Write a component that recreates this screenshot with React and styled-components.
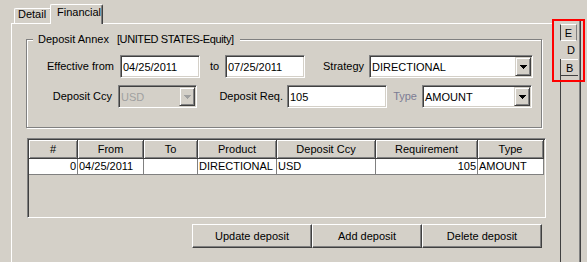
import React from "react"
import styled, { createGlobalStyle, css } from "styled-components"

const GlobalStyle = createGlobalStyle`
  html, body {
    margin: 0;
    padding: 0;
    background: #d4d0c8;
  }
  body {
    font-family: "Liberation Sans", Arial, sans-serif;
    font-size: 11px;
    color: #000;
  }
`

const sunken = css`
  box-sizing: border-box;
  border: 1px solid;
  border-color: #808080 #fff #fff #808080;
  box-shadow: inset 1px 1px 0 #404040, inset -1px -1px 0 #d4d0c8;
`

const raised = css`
  border: 1px solid;
  border-color: #fff #404040 #404040 #fff;
  box-shadow: inset -1px -1px 0 #808080;
`

const Window = styled.div`
  position: relative;
  display: flex;
  width: 587px;
  height: 262px;
  overflow: hidden;
  background: #d4d0c8;
`

const Main = styled.div`
  display: flex;
  flex-direction: column;
  width: 552px;
`

const TabRow = styled.div`
  display: flex;
  align-items: flex-end;
  height: 23px;
  padding-left: 14px;
`

const Tab = styled.div`
  position: relative;
  box-sizing: border-box;
  width: ${p => p.$w}px;
  height: ${p => (p.$active ? 20 : 15)}px;
  margin-bottom: ${p => (p.$active ? -1 : 0)}px;
  margin-left: ${p => (p.$active ? -2 : 0)}px;
  padding-left: ${p => (p.$active ? 6 : 3)}px;
  line-height: ${p => (p.$active ? 14 : 11)}px;
  border-top: 1px solid #fff;
  border-left: 1px solid #fff;
  border-right: 1px solid #404040;
  box-shadow: inset -1px 0 0 #808080;
  border-radius: 2px 2px 0 0;
  background: #d4d0c8;
  z-index: ${p => (p.$active ? 1 : 0)};
`

const Panel = styled.div`
  flex: 1;
  display: flex;
  flex-direction: column;
  margin-left: 11px;
  border-top: 1px solid #fff;
  border-left: 1px solid #fff;
`

const GroupBox = styled.div`
  box-sizing: border-box;
  display: flex;
  flex-direction: column;
  width: 516px;
  height: 89px;
  margin: 15px 0 0 14px;
  border: 1px solid #808080;
  box-shadow: inset 1px 1px 0 #fff, 1px 1px 0 #fff;
`

const Legend = styled.div`
  display: flex;
  gap: 8px;
  align-self: flex-start;
  margin: -7px 0 0 6px;
  padding: 0 6px 0 5px;
  line-height: 13px;
  background: #d4d0c8;
`

const LegendNote = styled.span`
  letter-spacing: -0.4px;
`

const FieldRow = styled.div`
  display: flex;
  align-items: center;
  height: 23px;
  margin-top: ${p => p.$top}px;
`

const Label = styled.span`
  box-sizing: border-box;
  width: ${p => p.$w}px;
  padding: 0 ${p => p.$pr ?? 0}px 0 ${p => p.$pl ?? 0}px;
  text-align: ${p => (p.$left ? "left" : "right")};
  line-height: 13px;
  white-space: nowrap;
  color: ${p => (p.$disabled ? "#7c7c94" : "#000")};
`

const TextBox = styled.div`
  ${sunken};
  display: flex;
  align-items: center;
  width: ${p => p.$w}px;
  height: 23px;
  padding: 2px 2px 0;
  line-height: 13px;
  background: #fff;
`

const Combo = styled.div`
  ${sunken};
  display: flex;
  align-items: center;
  width: ${p => p.$w}px;
  height: 23px;
  padding: 0 1px 0 2px;
  background: ${p => (p.$disabled ? "#d4d0c8" : "#fff")};
  color: ${p => (p.$disabled ? "#a0a0a0" : "#000")};
`

const ComboValue = styled.span`
  flex: 1;
  padding-top: 2px;
  line-height: 13px;
  white-space: nowrap;
`

const DropButton = styled.span`
  box-sizing: border-box;
  display: flex;
  align-items: center;
  justify-content: center;
  width: 16px;
  height: 19px;
  border: 1px solid;
  border-color: #d4d0c8 #404040 #404040 #d4d0c8;
  box-shadow: inset 1px 1px 0 #fff, inset -1px -1px 0 #808080;
  background: #d4d0c8;
`

const Grid = styled.div`
  ${sunken};
  width: 519px;
  height: 80px;
  margin: 10px 0 0 15px;
  padding: 1px;
  background: #d4d0c8;
`

const Table = styled.table`
  width: 515px;
  table-layout: fixed;
  border-collapse: separate;
  border-spacing: 0;
  font: inherit;
`

const Col = styled.col`
  width: ${p => p.$w}px;
`

const HeadCell = styled.th`
  padding: 3px 0 2px;
  line-height: 13px;
  font-weight: normal;
  text-align: center;
  white-space: nowrap;
  background: #d4d0c8;
  border-right: 1px solid #404040;
  border-bottom: 1px solid #404040;
  box-shadow: inset 1px 1px 0 #fff, inset -1px -1px 0 #808080;
`

const Cell = styled.td`
  padding: 1px 1px 1px;
  line-height: 13px;
  white-space: nowrap;
  overflow: hidden;
  text-align: ${p => (p.$right ? "right" : "left")};
  background: #fff;
  border-right: 1px solid #808080;
  border-bottom: 1px solid #808080;
`

const ButtonRow = styled.div`
  display: flex;
  margin: 6px 0 0 180px;
`

const Button = styled.button`
  box-sizing: border-box;
  width: ${p => p.$w}px;
  height: 24px;
  padding: 0;
  font: inherit;
  line-height: 13px;
  color: #000;
  background: #d4d0c8;
  ${raised};
`

const SideStrip = styled.div`
  box-sizing: border-box;
  display: flex;
  flex-direction: column;
  width: 21px;
  margin: 20px 0 0 8px;
  border-right: 1px solid #404040;
  box-shadow: inset -1px 0 0 #808080;
`

const SideTab = styled.div`
  box-sizing: border-box;
  width: 17px;
  height: 17px;
  margin-top: 4px;
  padding-top: 2px;
  text-align: center;
  line-height: 13px;
  border-left: 1px solid #404040;
  border-top: 1px solid #fff;
  border-right: 1px solid #808080;
  border-bottom: 1px solid #fff;
`

const SideLabel = styled.div`
  height: 18px;
  padding: 3px 0 0 7px;
  box-sizing: border-box;
  line-height: 13px;
`

const SideRest = styled.div`
  flex: 1;
  border-left: 1px solid #404040;
`

const SideButton = styled.div`
  box-sizing: border-box;
  height: 17px;
  margin-right: 2px;
  padding: 2px 0 0 5px;
  line-height: 13px;
  border-top: 1px solid #fff;
  border-bottom: 1px solid #404040;
`

const Highlight = styled.div`
  position: absolute;
  left: 552px;
  top: 19px;
  box-sizing: border-box;
  width: 33px;
  height: 63px;
  border: 2px solid #f00;
  pointer-events: none;
`

const Arrow = ({ color = "#000" }) => (
  <svg width="7" height="4" viewBox="0 0 7 4" shapeRendering="crispEdges">
    <rect x="0" y="0" width="7" height="1" fill={color} />
    <rect x="1" y="1" width="5" height="1" fill={color} />
    <rect x="2" y="2" width="3" height="1" fill={color} />
    <rect x="3" y="3" width="1" height="1" fill={color} />
  </svg>
)

const Select = ({ w, value, disabled }) => (
  <Combo $w={w} $disabled={disabled}>
    <ComboValue>{value}</ComboValue>
    <DropButton>
      <Arrow color={disabled ? "#a0a0a0" : "#000"} />
    </DropButton>
  </Combo>
)

const columns = [
  { title: "#", width: 49 },
  { title: "From", width: 66 },
  { title: "To", width: 54 },
  { title: "Product", width: 79 },
  { title: "Deposit Ccy", width: 99 },
  { title: "Requirement", width: 102 },
  { title: "Type", width: 66 },
]

const deposits = [
  {
    id: 0,
    from: "04/25/2011",
    to: "",
    product: "DIRECTIONAL",
    ccy: "USD",
    requirement: 105,
    type: "AMOUNT",
  },
]

export default function App() {
  return (
    <>
      <GlobalStyle />
      <Window>
        <Main>
          <TabRow>
            <Tab $w={38}>Detail</Tab>
            <Tab $w={53} $active>
              Financial
            </Tab>
          </TabRow>
          <Panel>
            <GroupBox>
              <Legend>
                <span>Deposit Annex</span>
                <LegendNote>[UNITED STATES-Equity]</LegendNote>
              </Legend>
              <FieldRow $top={9}>
                <Label $w={93} $pr={6}>Effective from</Label>
                <TextBox $w={80}>04/25/2011</TextBox>
                <Label $w={25} $pl={10} $left>to</Label>
                <TextBox $w={80}>07/25/2011</TextBox>
                <Label $w={64} $pr={5}>Strategy</Label>
                <Select w={164} value="DIRECTIONAL" />
              </FieldRow>
              <FieldRow $top={7}>
                <Label $w={91} $pr={6}>Deposit Ccy</Label>
                <Select w={79} value="USD" disabled />
                <Label $w={90} $pr={4}>Deposit Req.</Label>
                <TextBox $w={100}>105</TextBox>
                <Label $w={35} $pr={5} $disabled>Type</Label>
                <Select w={110} value="AMOUNT" />
              </FieldRow>
            </GroupBox>

            <Grid>
              <Table>
                <colgroup>
                  {columns.map(c => (
                    <Col key={c.title} $w={c.width} />
                  ))}
                </colgroup>
                <thead>
                  <tr>
                    {columns.map(c => (
                      <HeadCell key={c.title}>{c.title}</HeadCell>
                    ))}
                  </tr>
                </thead>
                <tbody>
                  {deposits.map(d => (
                    <tr key={d.id}>
                      <Cell $right>{d.id}</Cell>
                      <Cell>{d.from}</Cell>
                      <Cell>{d.to}</Cell>
                      <Cell>{d.product}</Cell>
                      <Cell>{d.ccy}</Cell>
                      <Cell $right>{d.requirement}</Cell>
                      <Cell>{d.type}</Cell>
                    </tr>
                  ))}
                </tbody>
              </Table>
            </Grid>

            <ButtonRow>
              <Button $w={120}>Update deposit</Button>
              <Button $w={110}>Add deposit</Button>
              <Button $w={120}>Delete deposit</Button>
            </ButtonRow>
          </Panel>
        </Main>

        <SideStrip>
          <SideTab>E</SideTab>
          <SideLabel>D</SideLabel>
          <SideRest>
            <SideButton>B</SideButton>
          </SideRest>
        </SideStrip>

        <Highlight />
      </Window>
    </>
  )
}
